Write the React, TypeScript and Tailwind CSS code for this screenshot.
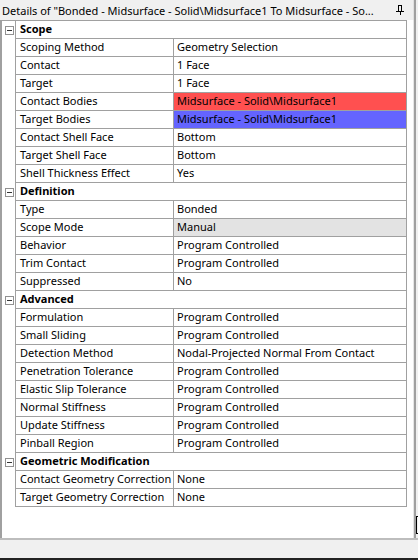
import React from 'react';

type Row =
  | { kind: 'section'; label: string }
  | { kind: 'prop'; name: string; value: string; tone?: 'red' | 'blue' | 'gray' };

const rows: Row[] = [
  { kind: 'section', label: 'Scope' },
  { kind: 'prop', name: 'Scoping Method', value: 'Geometry Selection' },
  { kind: 'prop', name: 'Contact', value: '1 Face' },
  { kind: 'prop', name: 'Target', value: '1 Face' },
  { kind: 'prop', name: 'Contact Bodies', value: 'Midsurface - Solid\\Midsurface1', tone: 'red' },
  { kind: 'prop', name: 'Target Bodies', value: 'Midsurface - Solid\\Midsurface1', tone: 'blue' },
  { kind: 'prop', name: 'Contact Shell Face', value: 'Bottom' },
  { kind: 'prop', name: 'Target Shell Face', value: 'Bottom' },
  { kind: 'prop', name: 'Shell Thickness Effect', value: 'Yes' },
  { kind: 'section', label: 'Definition' },
  { kind: 'prop', name: 'Type', value: 'Bonded' },
  { kind: 'prop', name: 'Scope Mode', value: 'Manual', tone: 'gray' },
  { kind: 'prop', name: 'Behavior', value: 'Program Controlled' },
  { kind: 'prop', name: 'Trim Contact', value: 'Program Controlled' },
  { kind: 'prop', name: 'Suppressed', value: 'No' },
  { kind: 'section', label: 'Advanced' },
  { kind: 'prop', name: 'Formulation', value: 'Program Controlled' },
  { kind: 'prop', name: 'Small Sliding', value: 'Program Controlled' },
  { kind: 'prop', name: 'Detection Method', value: 'Nodal-Projected Normal From Contact' },
  { kind: 'prop', name: 'Penetration Tolerance', value: 'Program Controlled' },
  { kind: 'prop', name: 'Elastic Slip Tolerance', value: 'Program Controlled' },
  { kind: 'prop', name: 'Normal Stiffness', value: 'Program Controlled' },
  { kind: 'prop', name: 'Update Stiffness', value: 'Program Controlled' },
  { kind: 'prop', name: 'Pinball Region', value: 'Program Controlled' },
  { kind: 'section', label: 'Geometric Modification' },
  { kind: 'prop', name: 'Contact Geometry Correction', value: 'None' },
  { kind: 'prop', name: 'Target Geometry Correction', value: 'None' },
];

const toneBg = {
  red: 'bg-[#ff5050]',
  blue: 'bg-[#6464ff]',
  gray: 'bg-[#e3e3e3]',
};

const CollapseBox = () => (
  <div className="w-[9px] h-[9px] border border-[#919191] bg-white flex items-center justify-center">
    <div className="w-[5px] h-px bg-[#333]" />
  </div>
);

const PinIcon = () => (
  <svg width="8" height="10" viewBox="0 0 8 10" className="block">
    <line x1="2.5" y1="0" x2="2.5" y2="6" stroke="#000" strokeWidth="1" />
    <line x1="5.5" y1="0" x2="5.5" y2="6" stroke="#000" strokeWidth="1" />
    <line x1="2" y1="0.5" x2="6" y2="0.5" stroke="#000" strokeWidth="1" />
    <line x1="0" y1="6.5" x2="8" y2="6.5" stroke="#000" strokeWidth="1" />
    <line x1="4.5" y1="7" x2="4.5" y2="10" stroke="#000" strokeWidth="1" />
  </svg>
);

export default function App() {
  return (
    <div
      className="w-[418px] h-[560px] flex flex-col bg-[#f0f0f0] text-black text-[11px] overflow-hidden"
      style={{ fontFamily: '"Noto Sans", "Segoe UI", sans-serif' }}
    >
      <div className="flex flex-1 min-h-0">
        {/* Details panel */}
        <div className="w-[414px] flex flex-col">
          {/* Title */}
          <div className="h-[20px] flex items-center gap-[8px] pl-[2px] pr-[9px] bg-[#f0f0f0] border-r border-[#e0e0e0]">
            <span className="flex-1 whitespace-nowrap leading-none">
              Details of "Bonded - Midsurface - Solid\Midsurface1 To Midsurface - So...
            </span>
            <PinIcon />
          </div>

          {/* Grid */}
          <div className="flex-1 bg-white border-l-2 border-[#a0a0a0] border-r border-r-[#e6e6e6] pr-[4px]">
            <div className="border-t border-[#a0a0a0] w-[405px]">
              {rows.map((row, i) =>
                row.kind === 'section' ? (
                  <div key={i} className="flex h-[18px]">
                    <div className="w-[13px] flex items-center justify-center pl-px">
                      <CollapseBox />
                    </div>
                    <div className="flex-1 flex items-center pl-[4px] border-l border-b border-r border-[#a0a0a0] font-bold">
                      {row.label}
                    </div>
                  </div>
                ) : (
                  <div key={i} className="flex h-[18px]">
                    <div className="w-[13px]" />
                    <div className="w-[158px] flex items-center pl-[4px] border-l border-b border-[#a0a0a0] whitespace-nowrap overflow-hidden">
                      {row.name}
                    </div>
                    <div
                      className={`flex-1 flex items-center pl-[3px] border-l border-b border-r border-[#a0a0a0] whitespace-nowrap overflow-hidden ${
                        row.tone ? toneBg[row.tone] : ''
                      }`}
                    >
                      {row.value}
                    </div>
                  </div>
                )
              )}
            </div>
          </div>
        </div>

        {/* Right edge */}
        <div className="w-[4px] flex flex-col border-l-2 border-[#a0a0a0] bg-[#f0f0f0]">
          <div className="flex-1" />
          <div className="h-[18px] w-[2px] border-l border-t border-b border-black mb-[4px]" />
        </div>
      </div>

      {/* Status strip */}
      <div className="h-[22px] border-t-2 border-[#bdbdbd] border-b-2 border-b-[#222] bg-[#f0f0f0] shrink-0" />
    </div>
  );
}
